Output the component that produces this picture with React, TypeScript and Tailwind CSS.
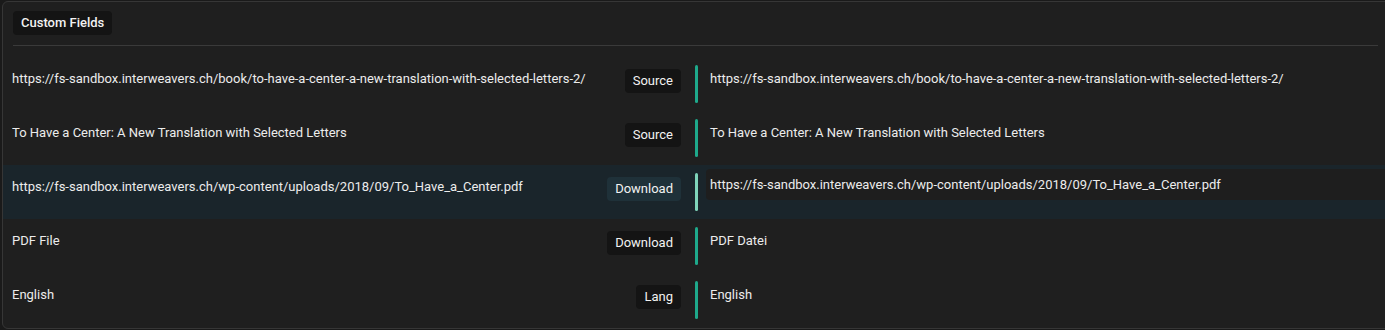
import React from 'react';

type Row = { left: string; action: string; right: string; active?: boolean };

const rows: Row[] = [
  {
    left: 'https://fs-sandbox.interweavers.ch/book/to-have-a-center-a-new-translation-with-selected-letters-2/',
    action: 'Source',
    right: 'https://fs-sandbox.interweavers.ch/book/to-have-a-center-a-new-translation-with-selected-letters-2/',
  },
  {
    left: 'To Have a Center: A New Translation with Selected Letters',
    action: 'Source',
    right: 'To Have a Center: A New Translation with Selected Letters',
  },
  {
    left: 'https://fs-sandbox.interweavers.ch/wp-content/uploads/2018/09/To_Have_a_Center.pdf',
    action: 'Download',
    right: 'https://fs-sandbox.interweavers.ch/wp-content/uploads/2018/09/To_Have_a_Center.pdf',
    active: true,
  },
  { left: 'PDF File', action: 'Download', right: 'PDF Datei' },
  { left: 'English', action: 'Lang', right: 'English' },
];

const FieldRow: React.FC<{ row: Row }> = ({ row }) => (
  <div className={`flex h-[54px] items-start ${row.active ? 'bg-[#1a252b]' : ''}`}>
    <div className="flex w-[678px] shrink-0 items-start pl-[9px]">
      <div className="min-w-0 flex-1 truncate pt-[13px] leading-[18px] text-[#ececec]">{row.left}</div>
      <span
        className={`mt-[12px] flex h-[24px] items-center rounded-[4px] px-[8px] text-[#f2f2f2] ${
          row.active ? 'bg-[#1f3139]' : 'bg-[#141414]'
        }`}
      >
        {row.action}
      </span>
    </div>
    <div
      className={`ml-[14px] mt-[8px] h-[38px] w-[3px] shrink-0 rounded-full ${
        row.active ? 'bg-[#7fd4ba]' : 'bg-[#1ea98b]'
      }`}
    />
    <div className="ml-[8px] flex-1">
      {row.active ? (
        <div className="mt-[4px] rounded-l-[4px] bg-[#1e1e1e] px-[4px] py-[8px] leading-[15px] text-[#ececec]">
          {row.right}
        </div>
      ) : (
        <div className="px-[4px] pt-[13px] leading-[18px] text-[#ececec]">{row.right}</div>
      )}
    </div>
  </div>
);

export default function App() {
  return (
    <div
      className="h-[330px] w-[1385px] overflow-hidden bg-[#1a1a1a] pl-[2px] pt-[1px] text-[13px]"
      style={{ fontFamily: 'Roboto, "Noto Sans", sans-serif' }}
    >
      <div className="h-[328px] w-[1400px] rounded-[6px] border border-[#363636] bg-[#1f1f1f]">
        <div className="pl-[10px] pr-[23px] pt-[9px]">
          <span className="inline-flex h-[24px] items-center rounded-[4px] bg-[#141414] px-[8px] font-medium text-[#f2f2f2]">
            Custom Fields
          </span>
          <div className="mt-[10px] h-px bg-[#3a3a3a]" />
        </div>
        <div className="mt-[11px]">
          {rows.map((r, i) => (
            <FieldRow key={i} row={r} />
          ))}
        </div>
      </div>
    </div>
  );
}
